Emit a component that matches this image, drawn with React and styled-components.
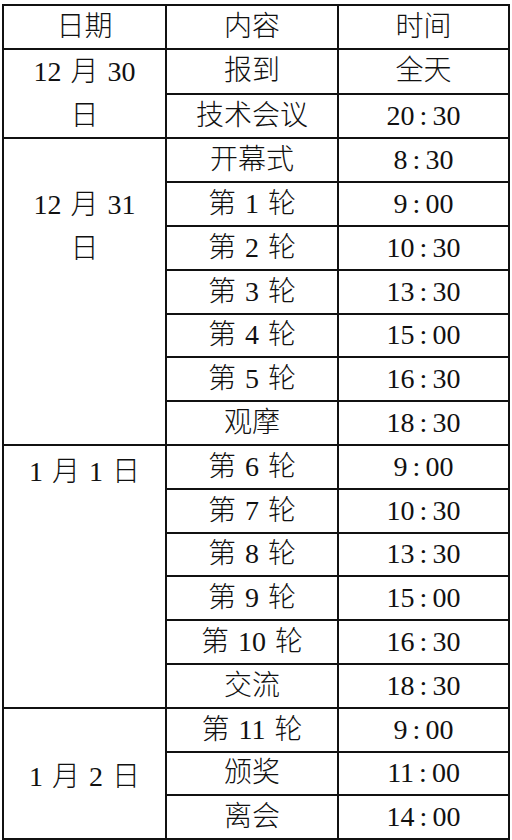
import React from "react";
import styled, { createGlobalStyle } from "styled-components";

const Global = createGlobalStyle`
  html, body { margin: 0; padding: 0; background: #fff; }
  body { font-family: "Liberation Serif", "Noto Sans CJK SC", serif; }
`;

const Page = styled.div`
  padding: 4px 0 0 2px;
`;

const Table = styled.table`
  border-collapse: collapse;
  table-layout: fixed;
  width: 506px;
  border: 2px solid #111;
  font-family: "Liberation Serif", "Noto Sans CJK SC", serif;
  font-weight: 300;
  font-size: 28px;
  color: #111;
  word-spacing: 2px;
`;

const Col = styled.col`
  width: ${(p) => p.$w}px;
`;

const Row = styled.tr`
  height: 43.8px;
`;

const Cell = styled.td`
  border: 2px solid #111;
  padding: 0;
  line-height: 34px;
  text-align: center;
  vertical-align: middle;
  white-space: nowrap;
`;

const HeadCell = styled(Cell).attrs({ as: "th" })`
  font-weight: 300;
`;

const DateCell = styled(Cell)`
  vertical-align: ${(p) => p.$valign};
  padding-top: ${(p) => p.$padTop}px;
`;

const DateLine = styled.div`
  line-height: 43.8px;
`;

const Colon = styled.span`
  margin: 0 5px;
`;

function Time({ value }) {
  const parts = value.split(":");
  if (parts.length < 2) return value;
  return (
    <>
      {parts[0]}
      <Colon>:</Colon>
      {parts[1]}
    </>
  );
}

const schedule = [
  {
    date: ["12 月 30", "日"],
    valign: "middle",
    padTop: 0,
    items: [
      ["报到", "全天"],
      ["技术会议", "20:30"],
    ],
  },
  {
    date: ["12 月 31", "日"],
    valign: "top",
    padTop: 44,
    items: [
      ["开幕式", "8:30"],
      ["第 1 轮", "9:00"],
      ["第 2 轮", "10:30"],
      ["第 3 轮", "13:30"],
      ["第 4 轮", "15:00"],
      ["第 5 轮", "16:30"],
      ["观摩", "18:30"],
    ],
  },
  {
    date: ["1 月 1 日"],
    valign: "top",
    padTop: 4,
    items: [
      ["第 6 轮", "9:00"],
      ["第 7 轮", "10:30"],
      ["第 8 轮", "13:30"],
      ["第 9 轮", "15:00"],
      ["第 10 轮", "16:30"],
      ["交流", "18:30"],
    ],
  },
  {
    date: ["1 月 2 日"],
    valign: "middle",
    padTop: 6,
    items: [
      ["第 11 轮", "9:00"],
      ["颁奖", "11:00"],
      ["离会", "14:00"],
    ],
  },
];

export default function App() {
  return (
    <Page>
      <Global />
      <Table>
        <colgroup>
          <Col $w={163} />
          <Col $w={172} />
          <Col $w={171} />
        </colgroup>
        <thead>
          <Row>
            <HeadCell>日期</HeadCell>
            <HeadCell>内容</HeadCell>
            <HeadCell>时间</HeadCell>
          </Row>
        </thead>
        <tbody>
          {schedule.map((day, di) =>
            day.items.map(([what, when], i) => (
              <Row key={`${di}-${i}`}>
                {i === 0 && (
                  <DateCell
                    rowSpan={day.items.length}
                    $valign={day.valign}
                    $padTop={day.padTop}
                  >
                    {day.date.map((line, li) => (
                      <DateLine key={li}>{line}</DateLine>
                    ))}
                  </DateCell>
                )}
                <Cell>{what}</Cell>
                <Cell>
                  <Time value={when} />
                </Cell>
              </Row>
            ))
          )}
        </tbody>
      </Table>
    </Page>
  );
}
